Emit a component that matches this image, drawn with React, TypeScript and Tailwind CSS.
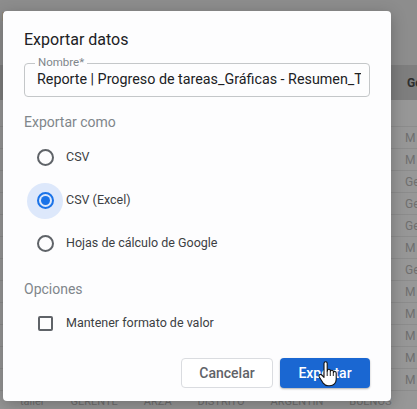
import React from "react";

const rowsRight = ["M", "M", "Ge", "Ge", "Ge", "M", "Ge", "M", "M", "M", "M", "M"];

function Radio({ checked }: { checked?: boolean }) {
  return (
    <div className={"w-[36px] h-[36px] rounded-full flex items-center justify-center " + (checked ? "bg-[#dde8fb]" : "")}>
      {checked ? (
        <div className="w-[17px] h-[17px] rounded-full border-2 border-[#1a73e8] flex items-center justify-center">
          <div className="w-[9px] h-[9px] rounded-full bg-[#1a73e8]" />
        </div>
      ) : (
        <div className="w-[17px] h-[17px] rounded-full border-2 border-[#5f6368]" />
      )}
    </div>
  );
}

export default function App() {
  return (
    <div className="relative w-[417px] h-[409px] overflow-hidden bg-[#8f8f8f]" style={{ fontFamily: "Roboto, 'Noto Sans', sans-serif" }}>
      {/* background table (dimmed) */}
      <div className="absolute left-0 top-0 w-full h-full">
        <div className="h-[65px] bg-[#8d8d8d] text-[#555] text-[12px] pl-[2px] pt-[8px]">M</div>
        <div className="h-[35px] bg-[#7e7e7e] flex items-center justify-end text-[12px] font-bold text-[#2e2e2e]">
          <span className="w-[10px] overflow-hidden">Ge</span>
        </div>
        <div className="h-[27px] bg-[#979797] border-b border-[#8c8c8c]" />
        {rowsRight.map((t, i) => (
          <div key={i} className="h-[22px] bg-[#979797] border-b border-[#8c8c8c] flex items-center justify-end text-[12px] text-[#6f6f6f]">
            <span className="mr-[14px]">o</span>
            <span className="w-[12px] overflow-hidden">{t}</span>
          </div>
        ))}
        <div className="h-[22px] bg-[#979797] flex items-center text-[11px] text-[#6f6f6f] gap-[26px] pl-[20px] whitespace-nowrap overflow-hidden">
          <span>taller</span><span>GERENTE</span><span>ARZA</span><span>DISTRITO</span><span>ARGENTIN</span><span>BUENOS</span><span>Mascuro</span><span>G</span>
        </div>
      </div>

      {/* modal dialog */}
      <div className="absolute left-[3px] top-[11px] w-[388px] h-[390px] bg-[#fdfdfe] rounded-[4px] shadow-[0_4px_16px_rgba(0,0,0,0.25)] flex flex-col pl-[21px] pr-[21px]">
        <div className="mt-[17px] h-[24px] leading-[24px] text-[16px] text-[#202124]">Exportar datos</div>
        <div className="relative mt-[11px] h-[34px] border border-[#c4c7c9] rounded-[4px] flex items-center pl-[12px] pr-[8px] overflow-hidden">
          <span className="whitespace-nowrap overflow-hidden text-[14.3px] text-[#202124]">Reporte | Progreso de tareas_Gráficas - Resumen_Tareas</span>
        </div>
        <div className="relative">
          <span className="absolute left-[11px] top-[-41px] bg-[#fdfdfe] px-[3px] text-[11.5px] leading-[12px] text-[#80868b]">Nombre*</span>
        </div>
        <div className="mt-[15px] h-[20px] leading-[20px] text-[14px] text-[#80868b]">Exportar como</div>
        <div className="mt-[4px] ml-[3px] flex flex-col">
          <div className="h-[43px] flex items-center">
            <Radio />
            <span className="ml-[3px] text-[12.5px] text-[#3c4043]">CSV</span>
          </div>
          <div className="h-[43px] flex items-center">
            <Radio checked />
            <span className="ml-[3px] text-[12.5px] text-[#3c4043]">CSV (Excel)</span>
          </div>
          <div className="h-[43px] flex items-center">
            <Radio />
            <span className="ml-[3px] text-[12.5px] text-[#3c4043]">Hojas de cálculo de Google</span>
          </div>
        </div>
        <div className="mt-[14px] h-[20px] leading-[20px] text-[14px] text-[#80868b]">Opciones</div>
        <div className="mt-[6px] ml-[3px] h-[36px] flex items-center">
          <div className="w-[36px] h-[36px] flex items-center justify-center">
            <div className="w-[15px] h-[15px] rounded-[2px] border-2 border-[#5f6368]" />
          </div>
          <span className="ml-[3px] text-[12.5px] text-[#3c4043]">Mantener formato de valor</span>
        </div>
        <div className="mt-auto mb-[13px] flex justify-end gap-[7px]">
          <button className="w-[92px] h-[30px] rounded-[4px] border border-[#dadce0] bg-white text-[14px] font-medium text-[#5f6368]">Cancelar</button>
          <button className="w-[90px] h-[30px] rounded-[4px] bg-[#1a67d2] text-[14px] font-medium text-white shadow-[0_1px_2px_rgba(0,0,0,0.3)]">Exportar</button>
        </div>
      </div>

      {/* mouse cursor */}
      <svg className="absolute left-[318px] top-[361px]" width="20" height="26" viewBox="0 0 20 26">
        <path d="M6 2.5c0-1 .7-1.7 1.6-1.7S9.2 1.5 9.2 2.5V10l.2-.1c0-1 .7-1.6 1.5-1.6s1.5.6 1.5 1.6v.6c.1-.8.8-1.3 1.5-1.300.8 0 1.5.6 1.5 1.5v.8c.2-.6.7-1 1.4-1 .8 0 1.4.6 1.4 1.5v6.2c0 3.600-2.6 6.6-6.3 6.6H10c-2.2 0-3.6-1-4.8-2.6L1.3 16c-.6-.8-.4-1.8.3-2.3.7-.5 1.6-.3 2.2.3L6 16.3V2.5z" fill="#fff" stroke="#111" strokeWidth="1.1" strokeLinejoin="round" />
        <path d="M9.2 10v5M12.3 10.5v4.5M15.3 11.5v3.5" stroke="#111" strokeWidth="0.9" />
      </svg>
    </div>
  );
}
